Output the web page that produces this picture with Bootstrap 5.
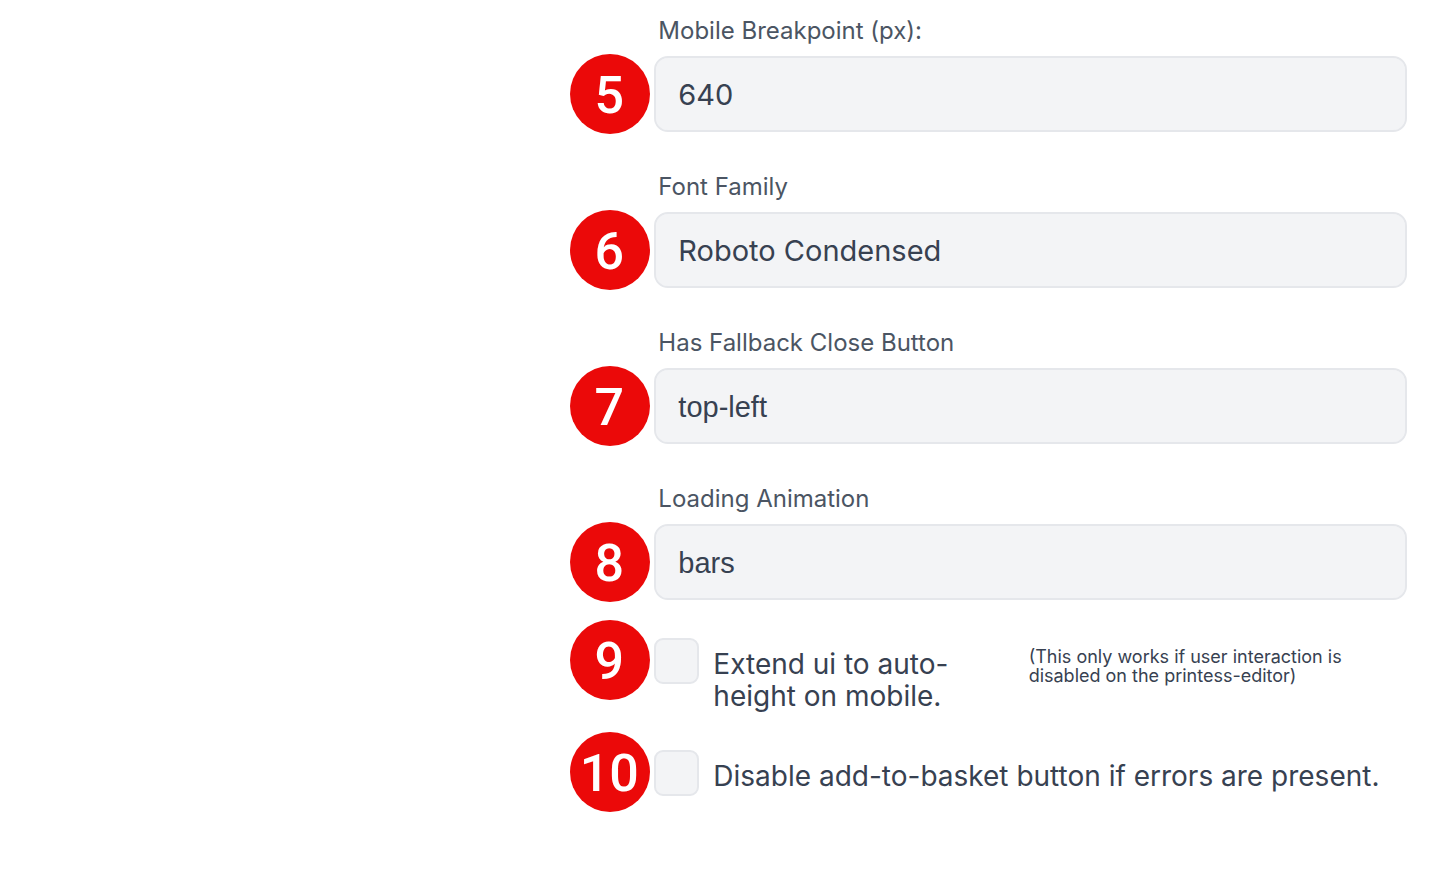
<!DOCTYPE html>
<html lang="en">
<head>
<meta charset="utf-8">
<meta name="viewport" content="width=device-width, initial-scale=1">
<title>Editor settings</title>
<link href="https://cdn.jsdelivr.net/npm/bootstrap@5.3.0/dist/css/bootstrap.min.css" rel="stylesheet">
<style>
  body { background: #fff; color: #374151; font-family: Inter, "Liberation Sans", sans-serif; }
  .settings { width: calc(58% - 2px); min-width: 640px; padding: 15px 39px 0 0; box-sizing: content-box; }
  .field { display: grid; grid-template-columns: 80px 1fr; column-gap: 4px; margin-bottom: 37px; align-items: center; }
  .field label { grid-column: 2; padding-left: 4px; margin-bottom: 7px; font-size: 24px; line-height: 32px; color: #4b5563; }
  .field-last { margin-bottom: 18px; }
  .step { width: 80px; height: 80px; padding-right: 2px; background: #eb0909; color: #fff; font: 500 52px/84px Roboto, "Liberation Sans", sans-serif; }
  .field .form-control { height: 76px; padding: 0 22px; border: 2px solid #e5e7eb; border-radius: 14px; background-color: #f3f4f6; color: #374151; font-size: 29px; line-height: 36px; }
  .field select.form-control { padding-top: 2px; font-family: "Liberation Sans", sans-serif; }
  .option { gap: 4px; margin-bottom: 20px; }
  .option .form-check-input { width: 45px; height: 46px; margin: 18px 10px 0 0; border: 2px solid #e5e7eb; border-radius: 9px; background-color: #f3f4f6; }
  .option label { padding-top: 28px; font-size: 28px; line-height: 32px; }
  .split { display: grid; grid-template-columns: 5fr 6fr; }
  .note { padding-top: 27px; font-size: 18px; line-height: 19px; }
</style>
</head>
<body>
<form class="settings ms-auto">
  <div class="field">
    <label for="breakpoint">Mobile Breakpoint (px):</label>
    <span class="step rounded-circle text-center">5</span>
    <input class="form-control" id="breakpoint" type="text" value="640">
  </div>
  <div class="field">
    <label for="family">Font Family</label>
    <span class="step rounded-circle text-center">6</span>
    <input class="form-control" id="family" type="text" value="Roboto Condensed">
  </div>
  <div class="field">
    <label for="close">Has Fallback Close Button</label>
    <span class="step rounded-circle text-center">7</span>
    <select class="form-control" id="close"><option>top-left</option></select>
  </div>
  <div class="field field-last">
    <label for="animation">Loading Animation</label>
    <span class="step rounded-circle text-center">8</span>
    <select class="form-control" id="animation"><option>bars</option></select>
  </div>
  <div class="option d-flex align-items-start">
    <span class="step rounded-circle text-center flex-shrink-0">9</span>
    <div class="d-flex flex-grow-1">
      <input class="form-check-input flex-shrink-0" id="extend" type="checkbox">
      <div class="split flex-grow-1 ps-1">
        <label for="extend">Extend ui to auto-height on mobile.</label>
        <div class="note">(This only works if user interaction is disabled on the printess-editor)</div>
      </div>
    </div>
  </div>
  <div class="option d-flex align-items-start">
    <span class="step rounded-circle text-center flex-shrink-0">10</span>
    <div class="d-flex flex-grow-1">
      <input class="form-check-input flex-shrink-0" id="basket" type="checkbox">
      <label class="ps-1" for="basket">Disable add-to-basket button if errors are present.</label>
    </div>
  </div>
</form>
<script src="https://cdn.jsdelivr.net/npm/bootstrap@5.3.0/dist/js/bootstrap.bundle.min.js"></script>
</body>
</html>
